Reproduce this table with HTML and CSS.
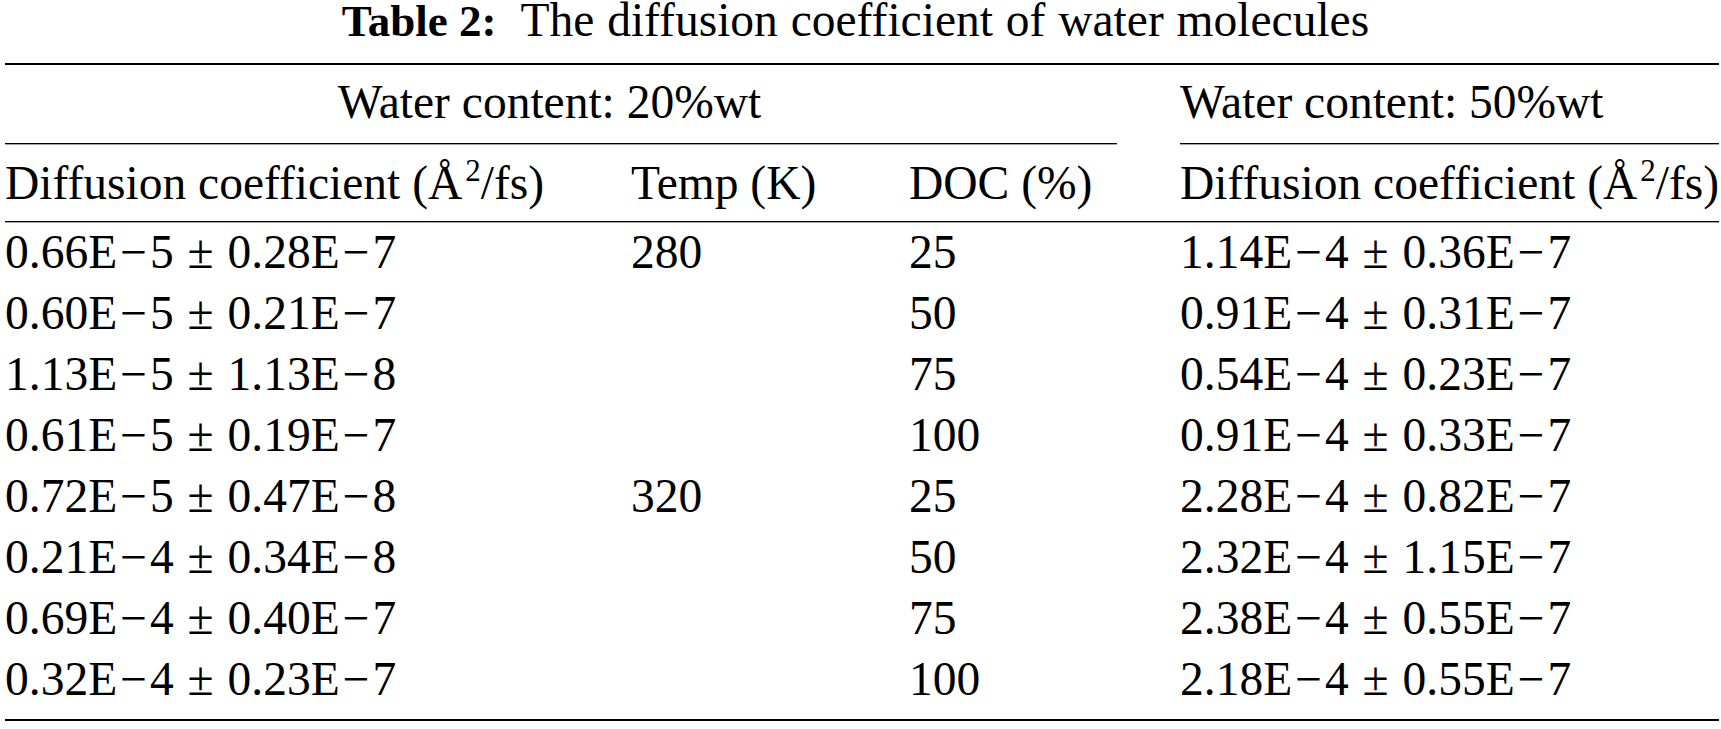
FILE: index.html
```html
<!DOCTYPE html>
<html lang="en">
<head>
<meta charset="utf-8">
<title>Table 2</title>
<link rel="stylesheet" href="styles.css">
</head>
<body>
<div class="page">
  <div class="caption"><b class="caption-label">Table 2:</b><span class="caption-text">The diffusion coefficient of water molecules</span></div>
  <div class="table">
    <div class="cell head1 span-left">Water content: 20%wt</div>
    <div class="cell head1 col-right">Water content: 50%wt</div>

    <div class="cell head2 c1">Diffusion coefficient (Å<span class="sup">2</span>/fs)</div>
    <div class="cell head2 c2">Temp (K)</div>
    <div class="cell head2 c3">DOC (%)</div>
    <div class="cell head2 col-right">Diffusion coefficient (Å<span class="sup">2</span>/fs)</div>

    <div class="cell c1 num">0.66E<span class="m">−</span>5 ± 0.28E<span class="m">−</span>7</div>
    <div class="cell c2">280</div>
    <div class="cell c3">25</div>
    <div class="cell col-right num">1.14E<span class="m">−</span>4 ± 0.36E<span class="m">−</span>7</div>

    <div class="cell c1 num">0.60E<span class="m">−</span>5 ± 0.21E<span class="m">−</span>7</div>
    <div class="cell c2"></div>
    <div class="cell c3">50</div>
    <div class="cell col-right num">0.91E<span class="m">−</span>4 ± 0.31E<span class="m">−</span>7</div>

    <div class="cell c1 num">1.13E<span class="m">−</span>5 ± 1.13E<span class="m">−</span>8</div>
    <div class="cell c2"></div>
    <div class="cell c3">75</div>
    <div class="cell col-right num">0.54E<span class="m">−</span>4 ± 0.23E<span class="m">−</span>7</div>

    <div class="cell c1 num">0.61E<span class="m">−</span>5 ± 0.19E<span class="m">−</span>7</div>
    <div class="cell c2"></div>
    <div class="cell c3">100</div>
    <div class="cell col-right num">0.91E<span class="m">−</span>4 ± 0.33E<span class="m">−</span>7</div>

    <div class="cell c1 num">0.72E<span class="m">−</span>5 ± 0.47E<span class="m">−</span>8</div>
    <div class="cell c2">320</div>
    <div class="cell c3">25</div>
    <div class="cell col-right num">2.28E<span class="m">−</span>4 ± 0.82E<span class="m">−</span>7</div>

    <div class="cell c1 num">0.21E<span class="m">−</span>4 ± 0.34E<span class="m">−</span>8</div>
    <div class="cell c2"></div>
    <div class="cell c3">50</div>
    <div class="cell col-right num">2.32E<span class="m">−</span>4 ± 1.15E<span class="m">−</span>7</div>

    <div class="cell c1 num">0.69E<span class="m">−</span>4 ± 0.40E<span class="m">−</span>7</div>
    <div class="cell c2"></div>
    <div class="cell c3">75</div>
    <div class="cell col-right num">2.38E<span class="m">−</span>4 ± 0.55E<span class="m">−</span>7</div>

    <div class="cell c1 num last">0.32E<span class="m">−</span>4 ± 0.23E<span class="m">−</span>7</div>
    <div class="cell c2 last"></div>
    <div class="cell c3 last">100</div>
    <div class="cell col-right num last">2.18E<span class="m">−</span>4 ± 0.55E<span class="m">−</span>7</div>
  </div>
</div>
</body>
</html>
```
FILE: styles.css
```css
html, body {
  margin: 0;
  padding: 0;
  background: #ffffff;
}

body {
  font-family: "Liberation Serif", "Times New Roman", serif;
  font-size: 47.5px;
  color: #000000;
}

.page {
  width: 1714px;
  padding-left: 5px;
}

.caption {
  font-size: 46px;
  line-height: 41px;
  height: 41px;
  text-align: center;
  padding-right: 13px;
  margin-bottom: 22px;
  white-space: nowrap;
}

.caption-label {
  font-weight: bold;
  font-size: 45px;
}

.caption-text {
  margin-left: 24px;
  font-size: 47.5px;
  word-spacing: 1px;
}

.table {
  display: grid;
  grid-template-columns: 626px 278px 208px 63px 1fr;
  border-top: 2px solid #000;
  border-bottom: 2px solid #000;
}

.cell {
  line-height: 61px;
  height: 61px;
  white-space: nowrap;
}

.num {
  word-spacing: 2px;
}

.m {
  margin: 0 3px;
}

.head1 {
  padding-top: 7px;
  padding-bottom: 10px;
  border-bottom: 1px solid #000;
  box-shadow: 0 1px 0 rgba(0, 0, 0, 0.35);
}

.span-left {
  grid-column: 1 / 4;
  text-align: center;
  padding-right: 23px;
}

.col-right {
  grid-column: 5 / 6;
}

.head2 {
  padding-top: 9px;
  padding-bottom: 7px;
  border-bottom: 1px solid #000;
  box-shadow: 0 1px 0 rgba(0, 0, 0, 0.35);
}

.head2.c3 {
  margin-right: -63px;
  padding-right: 63px;
}

.c1 {
  grid-column: 1 / 2;
}

.c2 {
  grid-column: 2 / 3;
}

.c3 {
  grid-column: 3 / 4;
}

.last {
  padding-bottom: 9px;
}

.sup {
  font-size: 31px;
  line-height: 0;
  vertical-align: 18px;
  margin-left: 3px;
}
```
